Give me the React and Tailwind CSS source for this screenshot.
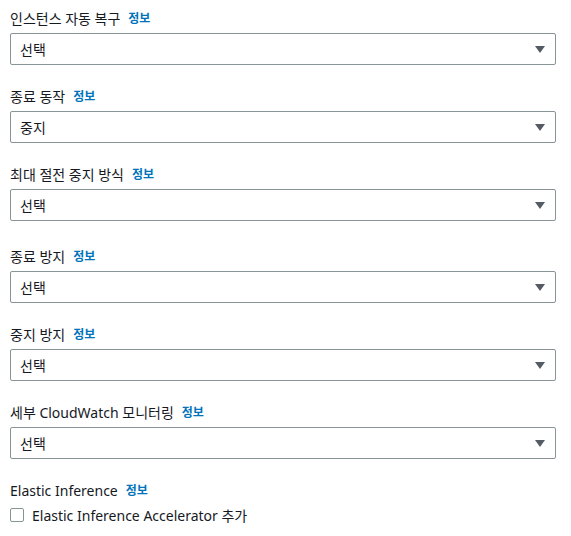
import React from 'react';

const fields = [
  { label: '인스턴스 자동 복구', value: '선택' },
  { label: '종료 동작', value: '중지' },
  { label: '최대 절전 중지 방식', value: '선택', extra: true },
  { label: '종료 방지', value: '선택' },
  { label: '중지 방지', value: '선택' },
  { label: '세부 CloudWatch 모니터링', value: '선택' },
];

function Label({ children }) {
  return (
    <div className="h-[22px] flex items-center gap-[8px] text-[14px] leading-[22px] text-[#16191f]">
      <span>{ children }</span>
      <span className="text-[12px] font-semibold text-[#0073bb]">정보</span>
    </div>
  );
}

function Select({ value }) {
  return (
    <div className="mt-[3px] h-[32px] border border-[#879596] rounded-[2px] flex items-center justify-between pl-[9px] pr-[9px] bg-white">
      <span className="text-[14px] text-[#16191f]">{ value }</span>
      <svg width="12" height="10" viewBox="0 0 12 10">
        <polygon points="1,2 11,2 6,9" fill="#545b64" />
      </svg>
    </div>
  );
}

export default function App() {
  return (
    <div className="w-[571px] h-[536px] bg-white pl-[10px] pr-[15px] pt-[8px]" style={{ fontFamily: '"Noto Sans", "Noto Sans CJK KR", sans-serif' }}>
      { fields.map((f) => (
        <div key={ f.label } className={ f.extra ? 'mb-[25px]' : 'mb-[21px]' }>
          <Label>{ f.label }</Label>
          <Select value={ f.value } />
        </div>
      )) }
      <Label>Elastic Inference</Label>
      <div className="mt-[3px] flex items-center gap-[8px] h-[20px]">
        <div className="w-[14px] h-[14px] border border-[#879596] rounded-[2px]" />
        <span className="text-[14px] text-[#16191f]">Elastic Inference Accelerator 추가</span>
      </div>
    </div>
  );
}
